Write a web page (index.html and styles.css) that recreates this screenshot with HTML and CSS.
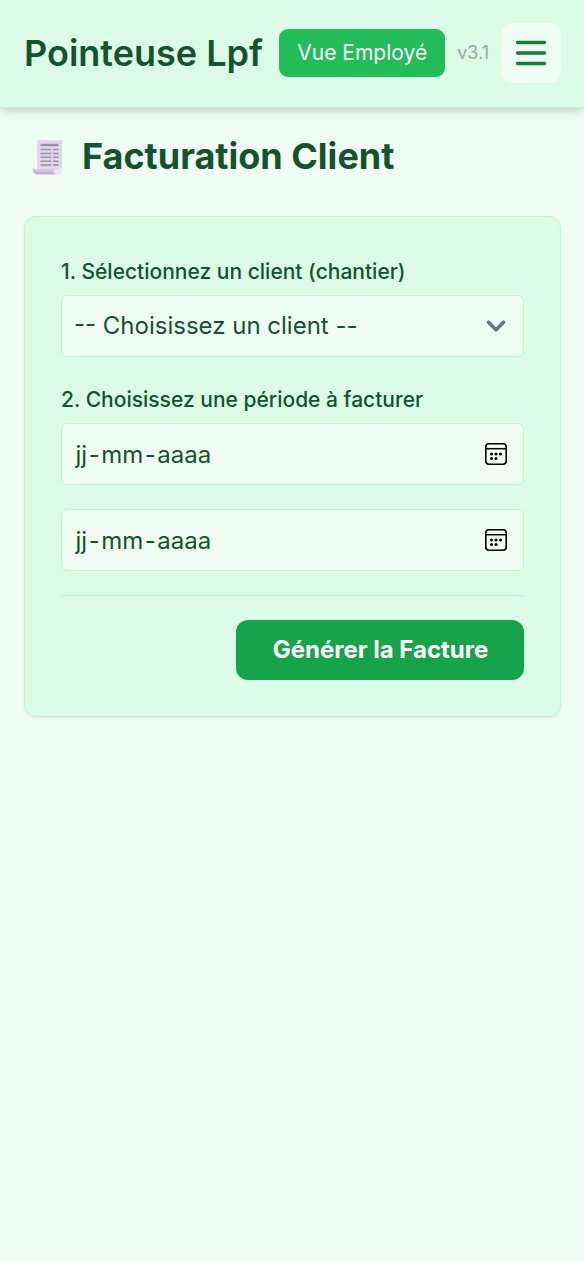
FILE: index.html
```html
<!DOCTYPE html>
<html lang="fr">
<head>
<meta charset="utf-8">
<title>Pointeuse Lpf</title>
<link rel="stylesheet" href="styles.css">
</head>
<body>
<header class="header">
  <h1 class="brand">Pointeuse Lpf</h1>
  <div class="actions">
    <button class="view-btn" type="button">Vue Employé</button>
    <span class="version">v3.1</span>
    <button class="menu-btn" type="button" aria-label="Menu">
      <svg width="36" height="36" viewBox="0 0 24 24" fill="none" stroke="currentColor" stroke-width="2.3" stroke-linecap="round"><path d="M3 5h18M3 12h18M3 19h18"/></svg>
    </button>
  </div>
</header>
<main class="main">
  <h2 class="title">
    <svg class="receipt" width="30" height="38" viewBox="0 0 30 38">
      <path d="M4 2l1.500 1L7 1.500l1.700 1.500L10.500 1.500l1.800 1.500L14 1.500l1.800 1.500L17.500 1.500l1.800 1.500L21 1.500l1.800 1.500L24.500 1.500l1.700 1.500L29 1.500V32q0 4-4 4H4z" fill="#e0d8e8"/>
      <path d="M7.500 7h18" stroke="#9890a0" stroke-width="2.400"/>
      <path d="M7.500 11.500h11M20 11.500h5.500M7.500 15.500h11M20 15.500h5.500M7.500 19.300h11M20 19.300h5.500M7.500 23.200h11M20 23.200h5.500" stroke="#9c92a6" stroke-width="1.400"/>
      <path d="M7.500 27h11M20 27h5.500" stroke="#a79eb0" stroke-width="2"/>
      <path d="M0 30q1 1.500 5 1.500h15q0 5 5 5H4q-4 0-4-6.500z" fill="#c2aeda"/>
      <path d="M.8 30.500q2 1.500 5 1.300h14v1.700H4q-3-.5-3.200-3z" fill="#d8cae7"/>
      <path d="M20 32q5 1 9-3.500Q30.500 36.500 25 36.500q-4 0-5-4.500z" fill="#eee6f4"/>
    </svg>
    <span>Facturation Client</span>
  </h2>
  <form class="card">
    <div class="label">1. Sélectionnez un client (chantier)</div>
    <div class="field select">
      <span>-- Choisissez un client --</span>
      <svg class="chevron" width="30" height="30" viewBox="0 0 20 20" fill="none" stroke="#6b7280" stroke-width="2.400" stroke-linecap="round" stroke-linejoin="round"><path d="M5 7.500l5 5 5-5"/></svg>
    </div>
    <div class="label">2. Choisissez une période à facturer</div>
    <div class="field date">
      <div class="date-text"><span>jj</span>-<span>mm</span>-<span>aaaa</span></div>
      <svg class="calendar" width="22" height="22" viewBox="0 0 22 22"><rect x=".8" y=".8" width="20.400" height="20.400" rx="3.200" fill="none" stroke="#000" stroke-width="1.600"/><path d="M1 5.700h20" stroke="#000" stroke-width="1.500"/><g fill="#000"><circle cx="6.500" cy="11" r="1.500"/><circle cx="11" cy="11" r="1.500"/><circle cx="15.500" cy="11" r="1.500"/><circle cx="6.500" cy="15.500" r="1.500"/><circle cx="11" cy="15.500" r="1.500"/></g></svg>
    </div>
    <div class="field date">
      <div class="date-text"><span>jj</span>-<span>mm</span>-<span>aaaa</span></div>
      <svg class="calendar" width="22" height="22" viewBox="0 0 22 22"><rect x=".8" y=".8" width="20.400" height="20.400" rx="3.200" fill="none" stroke="#000" stroke-width="1.600"/><path d="M1 5.700h20" stroke="#000" stroke-width="1.500"/><g fill="#000"><circle cx="6.500" cy="11" r="1.500"/><circle cx="11" cy="11" r="1.500"/><circle cx="15.500" cy="11" r="1.500"/><circle cx="6.500" cy="15.500" r="1.500"/><circle cx="11" cy="15.500" r="1.500"/></g></svg>
    </div>
    <div class="footer"><button class="submit" type="button">Générer la Facture</button></div>
  </form>
</main>
</body>
</html>
```
FILE: styles.css
```css
* { box-sizing: border-box; }
body {
  margin: 0;
  min-height: 1261px;
  background: #f0fdf4;
  color: #14532d;
  font-family: Inter, sans-serif;
  font-size: 24px;
  line-height: 36px;
}
h1, h2 { margin: 0; }
button { border: 0; padding: 0; font-family: inherit; }
svg { display: block; flex: none; }
.header {
  display: flex;
  align-items: center;
  justify-content: space-between;
  height: 108px;
  padding: 0 23px 1px 24px;
  background: #dcfce7;
  border-bottom: 1px solid #bbf7d0;
  box-shadow: 0 6px 9px -1px rgba(0,0,0,.1), 0 3px 6px -2px rgba(0,0,0,.1);
}
.brand { font-size: 36px; font-weight: 600; line-height: 48px; white-space: nowrap; }
.actions { display: flex; align-items: center; gap: 12px; }
.view-btn {
  width: 166px;
  height: 48px;
  border-radius: 9px;
  background: #22bc59;
  color: #fff;
  font-size: 21px;
  line-height: 30px;
}
.version { color: #9ca3af; font-size: 18px; line-height: 24px; }
.menu-btn {
  display: grid;
  place-items: center;
  width: 60px;
  height: 60px;
  border-radius: 12px;
  background: #f0fdf4;
  color: #15803d;
}
.main { padding: 24px 23px 0 24px; }
.title {
  display: flex;
  align-items: center;
  gap: 19px;
  height: 48px;
  padding-left: 9px;
  margin-bottom: 36px;
  font-size: 36px;
  font-weight: 700;
}
.receipt { margin-top: 2px; }
.card {
  height: 501px;
  padding: 36px;
  border: 1px solid #bbf7d0;
  border-radius: 12px;
  background: #dcfce7;
  box-shadow: 0 1.5px 3px rgba(0,0,0,.05);
}
.label { margin-bottom: 7px; padding-top: 2px; font-size: 21px; font-weight: 500; line-height: 33px; }
.field {
  display: flex;
  align-items: center;
  justify-content: space-between;
  height: 62px;
  margin-bottom: 24px;
  padding: 0 12px;
  border: 1px solid #bbf7d0;
  border-radius: 6px;
  background: #f0fdf4;
}
.date { padding-right: 16px; }
.date-text { padding-top: 2px; }
.date-text span { padding: 0 1.5px; }
.footer { display: flex; justify-content: flex-end; padding-top: 24px; border-top: 1px solid #bbf7d0; }
.submit {
  width: 288px;
  height: 60px;
  padding-left: 1px;
  border-radius: 12px;
  background: #16a34a;
  color: #fff;
  font-size: 24px;
  font-weight: 700;
  line-height: 36px;
}
```
